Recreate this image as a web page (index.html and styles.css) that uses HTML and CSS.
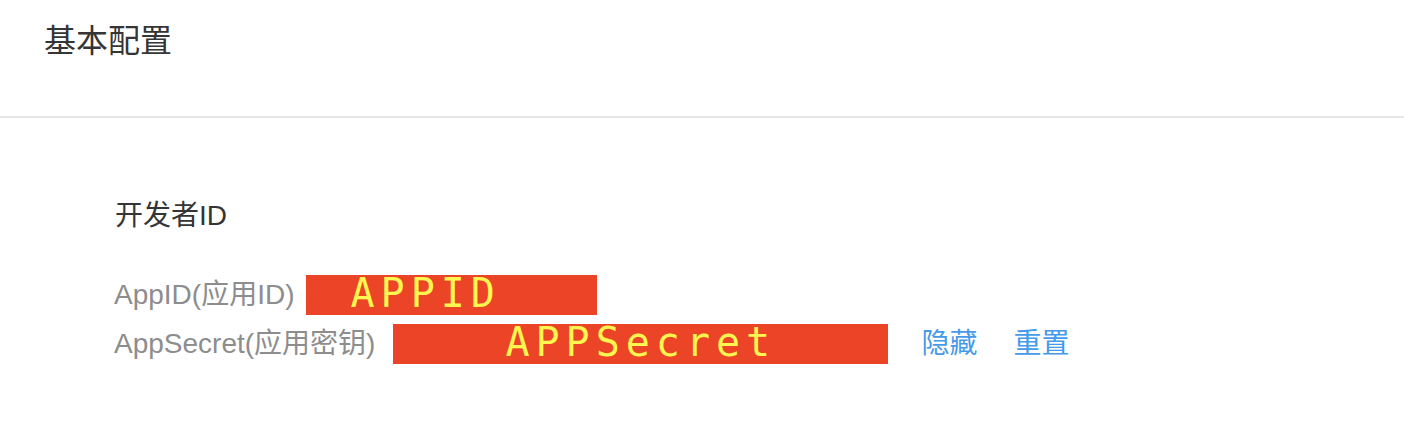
FILE: index.html
```html
<!DOCTYPE html>
<html lang="zh-CN">
<head>
<meta charset="utf-8">
<title>基本配置</title>
<link rel="stylesheet" href="styles.css">
</head>
<body>
  <header class="page-header">
    <h1 class="page-title">基本配置</h1>
  </header>
  <main class="section">
    <h2 class="section-title">开发者ID</h2>
    <div class="rows">
      <div class="row">
        <span class="label label-id">AppID(应用ID)</span>
        <span class="mask mask-id">APPID</span>
      </div>
      <div class="row">
        <span class="label">AppSecret(应用密钥)</span>
        <span class="mask mask-secret">APPSecret</span>
        <a class="link link-hide" href="#">隐藏</a>
        <a class="link" href="#">重置</a>
      </div>
    </div>
  </main>
</body>
</html>
```

FILE: styles.css
```css
html, body {
  margin: 0;
  padding: 0;
  background: #ffffff;
}

body {
  font-family: "Liberation Sans", "Noto Sans CJK SC", sans-serif;
  color: #353535;
}

.page-header {
  height: 118px;
  box-sizing: border-box;
  padding: 25px 0 0 44px;
  border-bottom: 2px solid #e7e7eb;
}

.page-title {
  margin: 0;
  font-size: 32px;
  line-height: 32px;
  font-weight: normal;
  color: #353535;
}

.section {
  padding: 84px 0 0 114px;
}

.section-title {
  margin: 0 0 0 1px;
  font-size: 28px;
  line-height: 28px;
  font-weight: normal;
  color: #353535;
}

.rows {
  margin-top: 45px;
  display: flex;
  flex-direction: column;
  gap: 9px;
}

.row {
  display: flex;
  align-items: center;
  height: 40px;
}

.label {
  font-size: 28px;
  line-height: 28px;
  color: #8d8d8d;
  margin-right: 18px;
}

.label-id {
  margin-right: 12px;
}

.mask {
  box-sizing: border-box;
  height: 40px;
  background: #ec4427;
  color: #fff64f;
  font-family: "DejaVu Sans Mono", monospace;
  font-size: 40px;
  line-height: 37px;
  letter-spacing: 6px;
  white-space: nowrap;
}

.mask-id {
  width: 291px;
  padding-left: 44px;
}

.mask-secret {
  width: 495px;
  padding-left: 112px;
}

.link {
  font-size: 28px;
  line-height: 28px;
  color: #459ae9;
  text-decoration: none;
}

.link-hide {
  margin-left: 33px;
  margin-right: 36px;
}
```
